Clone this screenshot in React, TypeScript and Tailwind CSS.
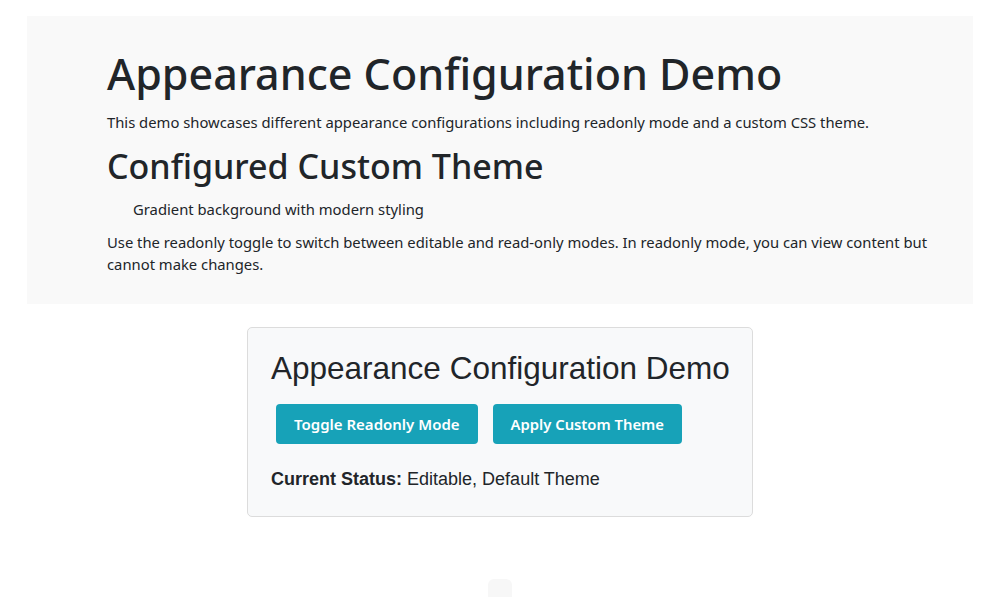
import React, { useState } from 'react';

const sans = "font-['Segoe_UI','Noto_Sans',sans-serif]";

export default function App() {
    const [readonly, setReadonly] = useState(false);
    const [custom, setCustom] = useState(false);

    return (
        <div className="min-h-[597px] bg-white text-[#212529]">
            <div className="ml-[27px] w-[946px] pt-[16px]">
                <section className={`bg-[#f9f9f9] pl-[80px] pr-[16px] pt-[32px] pb-[29px] ${sans}`}>
                    <h1 className="text-[43px] leading-[1.2] font-medium mb-[11px]">Appearance Configuration Demo</h1>
                    <p className="text-[14.8px] leading-[22px] mb-[13px]">
                        This demo showcases different appearance configurations including readonly mode and a custom CSS theme.
                    </p>
                    <h2 className="text-[34px] leading-[1.2] font-medium mb-[12px]">Configured Custom Theme</h2>
                    <ul className="pl-[26px] mb-[11px]">
                        <li className="text-[14.8px] leading-[22px]">Gradient background with modern styling</li>
                    </ul>
                    <p className="text-[14.8px] leading-[22px]">
                        Use the readonly toggle to switch between editable and read-only modes. In readonly mode, you can view content but cannot make changes.
                    </p>
                </section>

                <div className="ml-[220px] mt-[23px] w-[506px] rounded-[5px] border border-[#dcdcdc] bg-[#f8f9fa] px-[23px] pt-[22px] pb-[25px]">
                    <h3 className="whitespace-nowrap font-['Liberation_Sans',Arial,sans-serif] text-[31.5px] leading-[1.2] mb-[16px]">
                        Appearance Configuration Demo
                    </h3>
                    <div className="flex gap-[15px] px-[5px]">
                        <button
                            type="button"
                            onClick={() => setReadonly(!readonly)}
                            className={`h-[40px] px-[18px] rounded-[4px] bg-[#17a2b8] text-white text-[15px] font-semibold ${sans}`}
                        >
                            Toggle Readonly Mode
                        </button>
                        <button
                            type="button"
                            onClick={() => setCustom(!custom)}
                            className={`h-[40px] px-[18px] rounded-[4px] bg-[#17a2b8] text-white text-[14.8px] font-semibold ${sans}`}
                        >
                            Apply Custom Theme
                        </button>
                    </div>
                    <p className="mt-[25px] font-['Liberation_Sans',Arial,sans-serif] text-[18px] leading-[1.2]">
                        <strong>Current Status:</strong> {readonly ? 'Readonly' : 'Editable'}, {custom ? 'Custom Theme' : 'Default Theme'}
                    </p>
                </div>

                <div className="mx-auto mt-[62px] h-[24px] w-[24px] rounded-t-[6px] bg-[#f7f7f7]" />
            </div>
        </div>
    );
}
